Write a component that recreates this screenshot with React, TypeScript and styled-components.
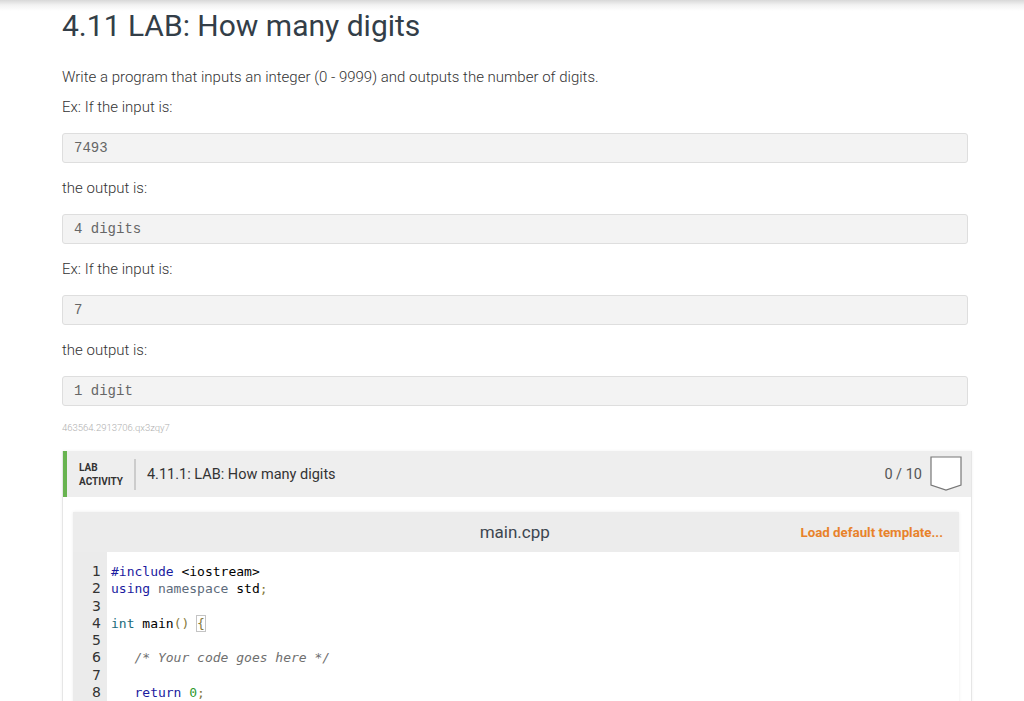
import styled, { createGlobalStyle } from "styled-components"

const GlobalStyle = createGlobalStyle`
  body {
    margin: 0;
    background: #fff;
    font-family: Roboto, "Liberation Sans", sans-serif;
  }
`

const Page = styled.div`
  min-height: 701px;
  background: linear-gradient(to bottom, #d8d8d8 0, #f2f2f2 5px, #fff 11px) no-repeat;
  padding: 8px 0 0 62px;
  box-sizing: border-box;
  overflow: hidden;
`

const Content = styled.div`
  width: 906px;
`

const Title = styled.h1`
  margin: 0;
  font-size: 30px;
  line-height: 36px;
  font-weight: 400;
  color: #333e48;
`

const Para = styled.p<{ $top?: number }>`
  margin: ${props => props.$top ?? 10}px 0 0;
  font-size: 15px;
  line-height: 20px;
  font-weight: 300;
  color: #333;
`

const Sample = styled.pre`
  margin: 16px 0 15px;
  height: 30px;
  box-sizing: border-box;
  padding: 0 11px;
  background: #f3f3f3;
  border: 1px solid #dedede;
  border-radius: 3px;
  font-family: "Liberation Mono", monospace;
  font-size: 14px;
  line-height: 28px;
  color: #666;
`

const SampleId = styled.div`
  margin-top: 16px;
  font-size: 9.5px;
  line-height: 12px;
  color: #b0b0b0;
  font-weight: 300;
`

const Lab = styled.div`
  margin-top: 17px;
  width: 908px;
  border: 1px solid #e6e6e6;
  border-top: none;
  box-shadow: 0 0 3px rgba(0, 0, 0, 0.06);
`

const LabHeader = styled.div`
  height: 46px;
  background: #eeeeee;
  border-left: 4px solid #68b350;
  display: flex;
  align-items: center;
  padding: 0 9px 0 12px;
`

const LabTag = styled.div`
  font-size: 10px;
  line-height: 14px;
  font-weight: 700;
  color: #333;
  padding-right: 11px;
  margin-right: 11px;
  border-right: 2px solid #cccccc;
  height: 30px;
  display: flex;
  flex-direction: column;
  justify-content: center;
  padding-top: 1px;
`

const LabTitle = styled.div`
  flex: 1;
  font-size: 14.5px;
  color: #333;
`

const Score = styled.div`
  font-size: 14.5px;
  color: #555;
  margin-right: 8px;
`

const LabBody = styled.div`
  padding: 15px 12px 0 10px;
  background: #fff;
`

const Editor = styled.div`
  box-shadow: 0 0 3px rgba(0, 0, 0, 0.08);
`

const EditorHeader = styled.div`
  height: 40px;
  background: #ececec;
  display: flex;
  align-items: center;
  padding-right: 16px;
`

const FileName = styled.div`
  flex: 1;
  text-align: center;
  font-size: 17px;
  color: #3c4650;
  padding-left: 156px;
`

const TemplateLink = styled.div`
  font-size: 13.3px;
  font-weight: 700;
  color: #e8822a;
`

const CodeArea = styled.div`
  display: flex;
  background: #fff;
  height: 160px;
`

const Gutter = styled.div`
  width: 34px;
  background: #ebebeb;
  padding: 11px 6px 0 0;
  box-sizing: border-box;
  text-align: right;
  font-family: "DejaVu Sans", sans-serif;
  font-size: 14px;
  line-height: 17.3px;
  color: #333;
`

const Code = styled.pre`
  margin: 0;
  padding: 11px 0 0 4px;
  font-family: "DejaVu Sans Mono", monospace;
  font-size: 13px;
  line-height: 17.3px;
  color: #000;
`

type TokKind = "kw" | "ns" | "type" | "punc" | "num" | "comment"

const tokColors: Record<TokKind, string> = {
  kw: "#1b1ba0",
  ns: "#5d6b7b",
  type: "#1b6b7a",
  punc: "#857a3c",
  num: "#2f9a2f",
  comment: "#6f6f6f",
}

const Tok = styled.span<{ $kind: TokKind }>`
  color: ${props => tokColors[props.$kind]};
  font-style: ${props => (props.$kind === "comment" ? "italic" : "normal")};
`

const BracketMatch = styled.span`
  color: #857a3c;
  outline: 1px solid #c4c4c4;
`

const Badge = () => (
  <svg width="32" height="36" viewBox="0 0 32 36">
    <path d="M1 1 H31 V29 L16 34 L1 29 Z" fill="#fff" stroke="#777" strokeWidth="1.2" />
  </svg>
)

const samples: { label: string; value: string }[] = [
  { label: "Ex: If the input is:", value: "7493" },
  { label: "the output is:", value: "4 digits" },
  { label: "Ex: If the input is:", value: "7" },
  { label: "the output is:", value: "1 digit" },
]

export default function App() {
  return (
    <Page>
      <GlobalStyle />
      <Content>
        <Title>4.11 LAB: How many digits</Title>
        <Para $top={23}>Write a program that inputs an integer (0 - 9999) and outputs the number of digits.</Para>
        {samples.map((s, i) => (
          <div key={i}>
            <Para $top={i === 0 ? 10 : 0}>{s.label}</Para>
            <Sample>{s.value}</Sample>
          </div>
        ))}
        <SampleId>463564.2913706.qx3zqy7</SampleId>

        <Lab>
          <LabHeader>
            <LabTag>
              <div>LAB</div>
              <div>ACTIVITY</div>
            </LabTag>
            <LabTitle>4.11.1: LAB: How many digits</LabTitle>
            <Score>0 / 10</Score>
            <Badge />
          </LabHeader>
          <LabBody>
            <Editor>
              <EditorHeader>
                <FileName>main.cpp</FileName>
                <TemplateLink>Load default template...</TemplateLink>
              </EditorHeader>
              <CodeArea>
                <Gutter>
                  {[1, 2, 3, 4, 5, 6, 7, 8].map(n => (
                    <div key={n}>{n}</div>
                  ))}
                </Gutter>
                <Code>
                  <Tok $kind="kw">#include</Tok> {"<iostream>"}
                  {"\n"}
                  <Tok $kind="kw">using</Tok> <Tok $kind="ns">namespace</Tok> std<Tok $kind="punc">;</Tok>
                  {"\n\n"}
                  <Tok $kind="type">int</Tok> main<Tok $kind="punc">()</Tok> <BracketMatch>{"{"}</BracketMatch>
                  {"\n\n"}
                  {"   "}<Tok $kind="comment">/* Your code goes here */</Tok>
                  {"\n\n"}
                  {"   "}<Tok $kind="kw">return</Tok> <Tok $kind="num">0</Tok><Tok $kind="punc">;</Tok>
                </Code>
              </CodeArea>
            </Editor>
          </LabBody>
        </Lab>
      </Content>
    </Page>
  )
}
